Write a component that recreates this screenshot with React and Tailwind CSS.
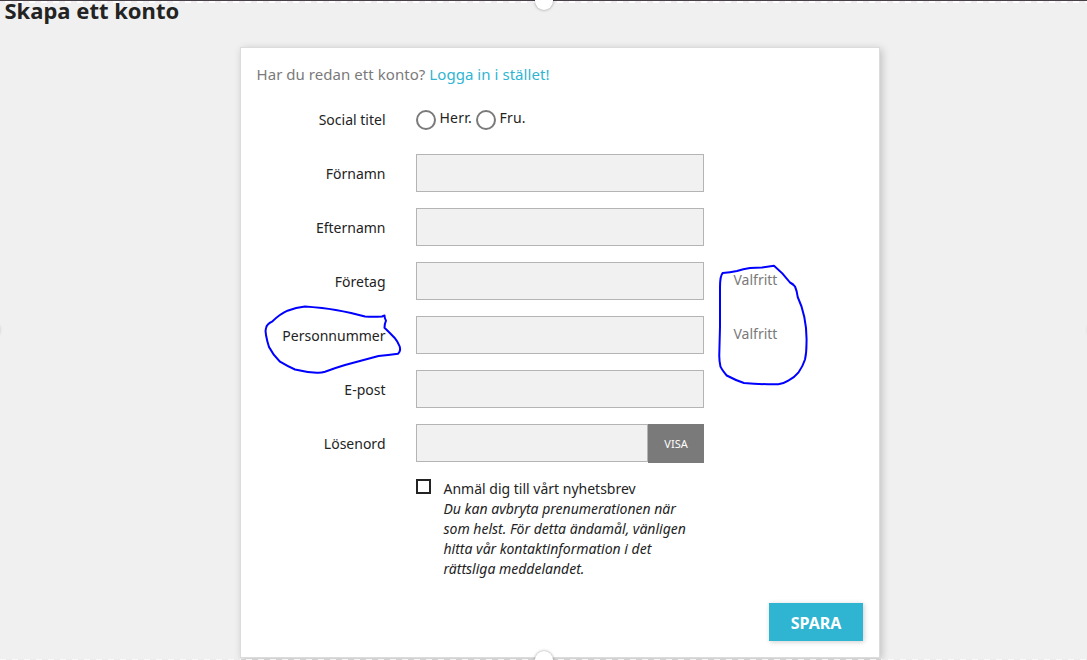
const textFields = [
  { id: "firstname", label: "Förnamn" },
  { id: "lastname", label: "Efternamn" },
  { id: "company", label: "Företag", optional: true },
  { id: "personnummer", label: "Personnummer", optional: true },
  { id: "email", label: "E-post" },
]

const titles = [
  { id: "mr", name: "Herr." },
  { id: "mrs", name: "Fru." },
]

function FormRow({ label, htmlFor, comment, children }) {
  return (
    <div className="flex mb-4 h-[38px]">
      <label htmlFor={htmlFor} className="w-[128.5px] mr-[30.5px] pt-[10px] text-right whitespace-nowrap">
        {label}
      </label>
      <div className="w-[288px]">{children}</div>
      {comment && <span className="ml-[29.5px] pt-2 text-[#7a7a7a]">{comment}</span>}
    </div>
  )
}

// Pen marks drawn on top of the form
function PenMarks() {
  return (
    <svg
      className="absolute top-0 left-0 pointer-events-none"
      width="1087"
      height="660"
      viewBox="0 0 1087 660"
      fill="none"
      stroke="#0000ff"
      strokeWidth="2"
      strokeLinejoin="round"
      strokeLinecap="round"
    >
      <path d="M384.5 315.5L382 316.5Q373 317 365 316.5L351 313Q335 309.500 322 308Q312 307 305 306.500Q296 307.500 287.500 310.700Q280 314 272 321.700Q267 324 266 328Q265 331 266 335Q267 341 269 347Q273 355 280 361.700Q287 366 295 369.500Q305 372 316.700 372.700Q321 373 325 371.700Q335 368 345 365L378.500 356Q388 355 398 353.700Q401 351 399.700 346.500Q398 342 394.500 337.700Q389 332 384.500 327.700Q384.500 324 386 320.700Q384.500 318 384.500 315.500Z" />
      <path d="M722.700 273Q730 272.500 737 271Q743 269 750 268L762 267.500L774 265.700Q783 273 790 282.500Q793 284 795 286.500Q797 291 797.700 297Q802 306 804.300 317Q807 330 806.500 343.500Q806.500 353 805 359.500Q803 366 798.300 372.700Q794 378 788.300 380.700Q783 384 778.300 384.300Q761 384.500 744 383Q735 380 726.700 375.500Q722 370 720.500 366.700Q719 360 719.300 353.500L720 327V287Q720 276 722.700 273Z" />
    </svg>
  )
}

export default function App() {
  return (
    <div className="relative w-[1087px] h-[660px] overflow-hidden bg-[#f0f0f0] font-['Noto_Sans',sans-serif] text-sm leading-5 text-[#232323]">
      <h1 className="h-[47px] pl-[4.5px] text-[22px] leading-5 font-bold">Skapa ett konto</h1>

      <section className="w-[640px] h-[611px] ml-[240px] p-4 bg-white border border-[#dcdcdc] shadow-[2px_2px_8px_0_rgba(0,0,0,0.2)]">
        <p className="h-9 -ml-[0.5px] text-[15px] leading-5 tracking-[0.05px] text-[#7a7a7a]">
          Har du redan ett konto? <a href="#" className="text-[#2fb5d2]">Logga in i stället!</a>
        </p>

        <form>
          <FormRow label="Social titel">
            <div className="flex pt-2">
              {titles.map((title) => (
                <label key={title.id} className="flex w-[60px]">
                  <input
                    type="radio"
                    name="id_gender"
                    className="appearance-none w-5 h-5 mt-[2px] mr-[3.5px] rounded-full border-2 border-[#7a7a7a] bg-white"
                  />
                  <span className="tracking-[0.2px]">{title.name}</span>
                </label>
              ))}
            </div>
          </FormRow>

          {textFields.map((field) => (
            <FormRow
              key={field.id}
              label={field.label}
              htmlFor={field.id}
              comment={field.optional ? "Valfritt" : null}
            >
              <input id={field.id} className="block w-full h-[38px] px-4 bg-[#f1f1f1] border border-[#b4b4b4]" />
            </FormRow>
          ))}

          <FormRow label="Lösenord" htmlFor="password">
            <div className="flex">
              <input
                id="password"
                type="password"
                className="w-[232px] h-[38px] px-4 bg-[#f1f1f1] border border-[#b4b4b4]"
              />
              <button type="button" className="w-14 h-[39px] bg-[#7a7a7a] text-white text-[11px]">
                VISA
              </button>
            </div>
          </FormRow>

          <label className="flex ml-[159px] w-[288px]">
            <input type="checkbox" className="appearance-none w-[15px] h-[15px] mt-px mr-[12.5px] border-2 border-[#232323]" />
            <span className="w-[250px] mt-px">
              Anmäl dig till vårt nyhetsbrev
              <br />
              <em>Du kan avbryta prenumerationen när som helst. För detta ändamål, vänligen hitta vår kontaktinformation i det rättsliga meddelandet.</em>
            </span>
          </label>

          <div className="flex justify-end mt-6">
            <button
              type="button"
              className="w-[94px] h-[38px] pt-[2px] bg-[#2fb5d2] text-white text-base font-bold shadow-[1px_1px_5px_0_rgba(0,0,0,0.2)]"
            >
              SPARA
            </button>
          </div>
        </form>
      </section>

      {/* Crop frame around the page */}
      <div className="absolute top-0 left-0 w-full h-px bg-[#464146]" />
      <div className="absolute top-px left-0 w-full h-[2px] bg-[repeating-linear-gradient(90deg,#f0ecf0_0_5px,#ffffff_5px_11px,#f0ecf0_11px_12px)]" />
      <div className="absolute bottom-0 left-0 w-full h-px bg-[repeating-linear-gradient(90deg,#fafafa_0_6px,#ececec_6px_12px)]" />
      <div className="absolute bottom-0 left-[241px] w-[640px] h-px bg-[repeating-linear-gradient(90deg,#d2d2d2_0_5px,#f6f6f6_5px_11px,#d2d2d2_11px_12px)]" />
      <div className="absolute -top-[8px] left-[535px] w-[18px] h-[18px] rounded-full bg-white shadow-[0_0_3px_rgba(0,0,0,0.4)]" />
      <div className="absolute -bottom-[9px] left-[535px] w-[18px] h-[18px] rounded-full bg-white shadow-[0_0_3px_rgba(0,0,0,0.4)]" />
      <div className="absolute top-[321px] -left-[18px] w-[18px] h-[18px] rounded-full bg-white shadow-[0_0_3px_rgba(0,0,0,0.2)]" />
      <div className="absolute top-[321px] -right-[18px] w-[18px] h-[18px] rounded-full bg-white shadow-[0_0_3px_rgba(0,0,0,0.1)]" />

      <PenMarks />
    </div>
  )
}
